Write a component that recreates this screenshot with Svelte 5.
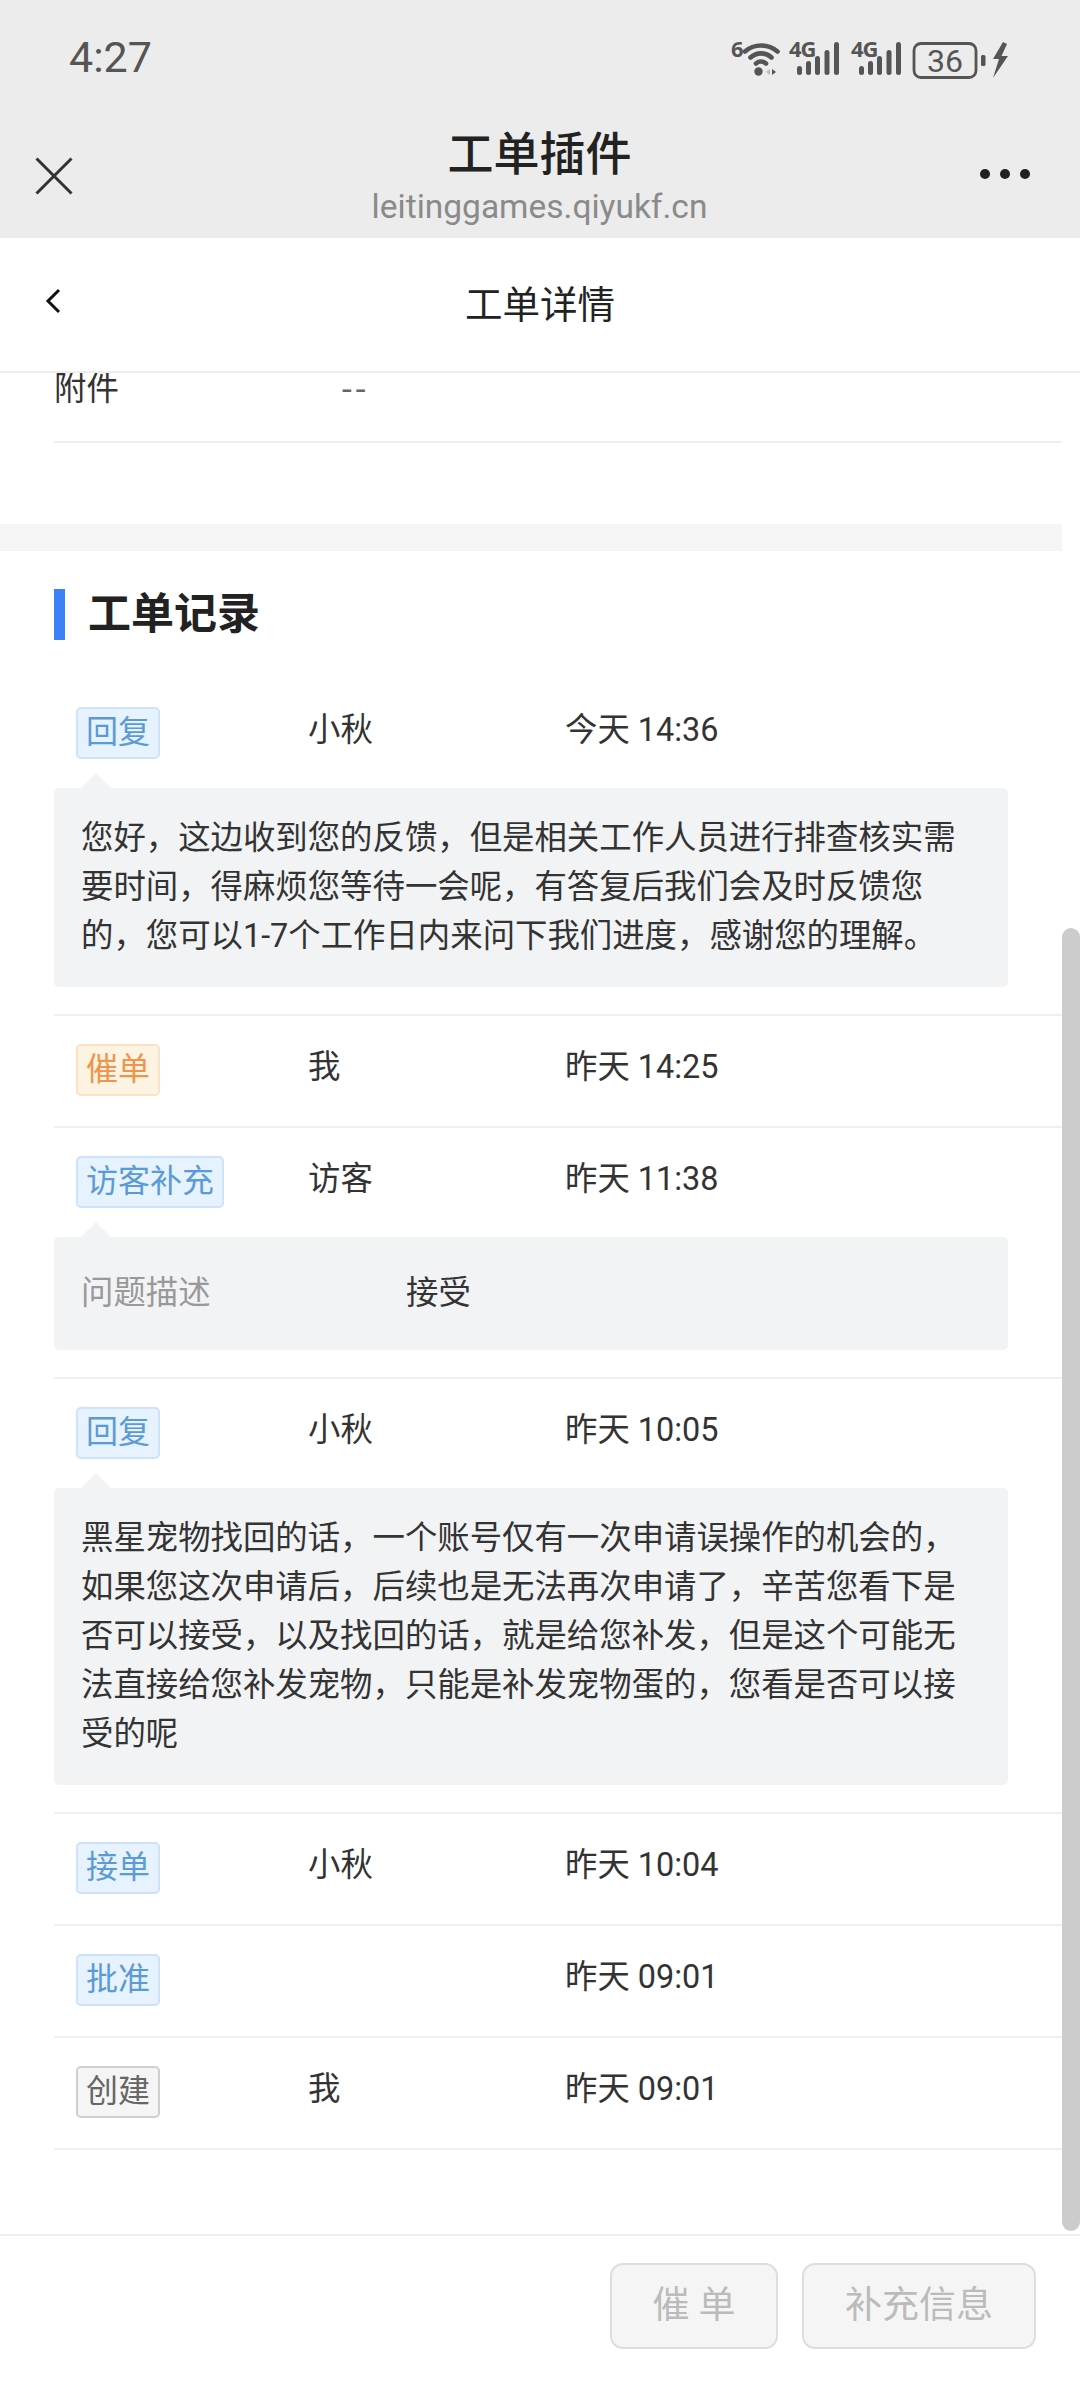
<script>
  const records = [
    { tag: '回复', kind: 'blue', who: '小秋', time: '今天 14:36', text: '您好，这边收到您的反馈，但是相关工作人员进行排查核实需要时间，得麻烦您等待一会呢，有答复后我们会及时反馈您的，您可以1-7个工作日内来问下我们进度，感谢您的理解。' },
    { tag: '催单', kind: 'orange', who: '我', time: '昨天 14:25' },
    { tag: '访客补充', kind: 'blue', who: '访客', time: '昨天 11:38', field: { label: '问题描述', value: '接受' } },
    { tag: '回复', kind: 'blue', who: '小秋', time: '昨天 10:05', text: '黑星宠物找回的话，一个账号仅有一次申请误操作的机会的，如果您这次申请后，后续也是无法再次申请了，辛苦您看下是否可以接受，以及找回的话，就是给您补发，但是这个可能无法直接给您补发宠物，只能是补发宠物蛋的，您看是否可以接受的呢' },
    { tag: '接单', kind: 'blue', who: '小秋', time: '昨天 10:04' },
    { tag: '批准', kind: 'blue', who: '', time: '昨天 09:01' },
    { tag: '创建', kind: 'gray', who: '我', time: '昨天 09:01' }
  ];

  const barX = [0, 9, 18, 27.5, 37];
  const barTop = [24, 19, 14, 8, 0];
</script>

{#snippet signal(x)}
  <text class="net" x={x} y="15">4G</text>
  {#each barX as bx, i}
    <rect x={x + 8 + bx} y={barTop[i] + 0} width="5" height={33 - barTop[i]} rx="2.5" fill="#555" />
  {/each}
{/snippet}

<div class="page">
  <header class="top">
    <div class="status">
      <span class="clock">4:27</span>
      <svg class="status-icons" width="278" height="50" viewBox="0 -8 278 50" fill="none">
        <text class="net" x="0" y="15">6</text>
        <g stroke="#555" stroke-width="4.6" stroke-linecap="round">
          <path d="M14 9.5C23 1.5 37 1.5 46.500 9.500" />
          <path d="M19.500 15.500C25.500 10 34.500 10 40.500 15.500" />
          <path d="M25 21.500C28 19 32 19 35 21.500" />
        </g>
        <circle cx="27.500" cy="29.500" r="4.200" fill="#555" />
        <path d="M35 30l4-3v6z" fill="#bbb" />
        <path d="M41 27l4 3-4 3z" fill="#555" />
        {@render signal(58)}
        {@render signal(120)}
        <rect x="183" y="1.500" width="62" height="34" rx="7" stroke="#555" stroke-width="2.800" />
        <text class="batt" x="214" y="30" text-anchor="middle">36</text>
        <rect x="250" y="13" width="4.500" height="11" rx="1.500" fill="#555" />
        <path d="M272 0L262 17H268L262 36L277 14H270.500L276 2Z" fill="#555" />
      </svg>
    </div>
    <div class="appbar">
      <svg class="close" width="38" height="38" viewBox="0 0 38 38" fill="none">
        <path d="M1.500 1.500L36.500 36.500M36.500 1.500L1.500 36.500" stroke="#333" stroke-width="3" />
      </svg>
      <div class="app-title">
        <div class="name">工单插件</div>
        <div class="host">leitinggames.qiyukf.cn</div>
      </div>
      <svg class="more" width="50" height="10" viewBox="0 0 50 10">
        <circle cx="5" cy="5" r="5" fill="#222" />
        <circle cx="25" cy="5" r="5" fill="#222" />
        <circle cx="45" cy="5" r="5" fill="#222" />
      </svg>
    </div>
  </header>

  <nav class="nav">
    <svg class="back" width="16" height="26" viewBox="0 0 16 26" fill="none">
      <path d="M14 2L3 13L14 24" stroke="#111" stroke-width="3" />
    </svg>
    <span>工单详情</span>
  </nav>

  <div class="scroller">
    <main class="content">
      <div class="attach">
        <span class="attach-label">附件</span>
        <span class="attach-value">--</span>
      </div>
      <div class="band"></div>

      <h2 class="heading">工单记录</h2>

      <div class="records">
        {#each records as r}
          <div class="record" class:has-bubble={r.text || r.field}>
            <div class="meta">
              <div class="tag-col"><span class="tag {r.kind}">{r.tag}</span></div>
              <span class="who">{r.who}</span>
              <span class="time">{r.time}</span>
            </div>
            {#if r.text}
              <div class="bubble"><p>{r.text}</p></div>
            {/if}
            {#if r.field}
              <div class="bubble field">
                <span class="field-label">{r.field.label}</span>
                <span>{r.field.value}</span>
              </div>
            {/if}
          </div>
        {/each}
      </div>
    </main>
    <div class="track"><div class="thumb"></div></div>
  </div>

  <footer class="footer">
    <button class="action urge" disabled>催 单</button>
    <button class="action more-info" disabled>补充信息</button>
  </footer>
</div>

<style>
  :global(body) {
    margin: 0;
    background: #fff;
  }

  .page {
    width: 1080px;
    height: 2403px;
    display: flex;
    flex-direction: column;
    overflow: hidden;
    font-family: Roboto, "Noto Sans CJK SC", sans-serif;
    font-size: 32.4px;
    color: #333;
  }

  .top {
    height: 238px;
    background: #ececec;
    flex: none;
  }

  .status {
    height: 114px;
    display: flex;
    align-items: center;
    justify-content: space-between;
    padding: 0 71px 0 69px;
  }

  .clock {
    font-size: 43px;
    color: #555;
  }

  .status-icons {
    margin-top: 4px;
  }

  .net {
    font: 700 22px "Open Sans", Roboto, sans-serif;
    letter-spacing: -1px;
    fill: #555;
  }

  .batt {
    font: 400 32px Roboto, sans-serif;
    fill: #555;
  }

  .appbar {
    height: 124px;
    display: grid;
    grid-template-columns: 1fr auto 1fr;
    align-items: start;
    padding: 0 50px 0 35px;
  }

  .close {
    margin-top: 43px;
  }

  .more {
    margin-top: 55px;
    justify-self: end;
  }

  .app-title {
    text-align: center;
    padding: 15px 0 0 0;
    transform: translateX(7px);
  }

  .name {
    font-size: 46px;
    line-height: 50px;
    font-weight: 500;
    color: #222;
  }

  .host {
    margin-top: 9px;
    font-size: 33.500px;
    line-height: 38px;
    color: #8a8a8a;
  }

  .nav {
    height: 135px;
    flex: none;
    box-sizing: border-box;
    border-bottom: 2px solid #eee;
    padding: 0 0 7px 45px;
    display: flex;
    align-items: center;
    font-size: 37.500px;
    color: #222;
  }

  .nav span {
    margin-left: 404px;
  }

  .scroller {
    flex: 1;
    min-height: 0;
    display: flex;
    overflow: hidden;
  }

  .content {
    flex: 1;
    min-width: 0;
    margin-top: -7px;
  }

  .attach {
    margin-left: 54px;
    padding-bottom: 29px;
    border-bottom: 2px solid #eee;
    display: flex;
    line-height: 46px;
  }

  .attach-label {
    width: 287px;
    box-sizing: border-box;
  }

  .attach-value {
    color: #666;
    font-family: "DejaVu Sans", sans-serif;
    letter-spacing: 2px;
  }

  .band {
    height: 27px;
    margin-top: 81px;
    background: #f5f5f5;
  }

  .heading {
    margin: 38px 0 39px 54px;
    padding-left: 23px;
    border-left: 11px solid #3b82f6;
    height: 51px;
    font-size: 43px;
    line-height: 50px;
    font-weight: 700;
    color: #222;
  }

  .record {
    margin-left: 54px;
    padding: 28px 0 30px;
    border-bottom: 2px solid #f0f0f0;
  }

  .has-bubble {
    padding-bottom: 27.5px;
  }

  .meta {
    display: flex;
    align-items: flex-start;
  }

  .tag-col {
    width: 254px;
    padding-left: 22px;
    box-sizing: border-box;
    flex: none;
    display: flex;
  }

  .tag {
    height: 52px;
    line-height: 47px;
    padding: 0 8px;
    box-sizing: border-box;
    border: 2px solid;
    border-radius: 5px;
    font-size: 32px;
  }

  .blue {
    background: #e6f2fd;
    border-color: #cfe3f8;
    color: #5b9bd5;
  }

  .orange {
    background: #fdf3e3;
    border-color: #fae3c4;
    color: #f0944a;
  }

  .gray {
    background: #f5f5f5;
    border-color: #cfcfcf;
    color: #666;
  }

  .who {
    width: 257px;
    flex: none;
    line-height: 46px;
  }

  .time {
    line-height: 46px;
  }

  .bubble {
    position: relative;
    margin: 28.5px 54px 0 0;
    padding: 26px 27px;
    background: #f2f3f5;
    border-radius: 5px;
    line-height: 49px;
  }

  .bubble::before {
    content: "";
    position: absolute;
    left: 27px;
    top: -15px;
    border-left: 15px solid transparent;
    border-right: 15px solid transparent;
    border-bottom: 15px solid #f2f3f5;
  }

  .bubble p {
    margin: 0;
  }

  .field {
    display: flex;
    padding: 32px 27px;
  }

  .field-label {
    width: 325px;
    color: #999;
  }

  .track {
    width: 18px;
    flex: none;
  }

  .thumb {
    margin-top: 555px;
    height: 1303px;
    background: #ccc;
    border-radius: 9px;
  }

  .footer {
    height: 169px;
    flex: none;
    box-sizing: border-box;
    border-top: 2px solid #eee;
    padding: 27px 44px 0 0;
    display: flex;
    justify-content: flex-end;
    align-items: flex-start;
    gap: 24px;
    background: #fff;
  }

  .action {
    height: 86px;
    border: 2px solid #ddd;
    border-radius: 13px;
    background: #f5f5f5;
    color: #bbb;
    font-family: inherit;
    font-size: 37px;
    padding: 0 0 9px;
  }

  .urge {
    width: 168px;
  }

  .more-info {
    width: 234px;
  }
</style>
